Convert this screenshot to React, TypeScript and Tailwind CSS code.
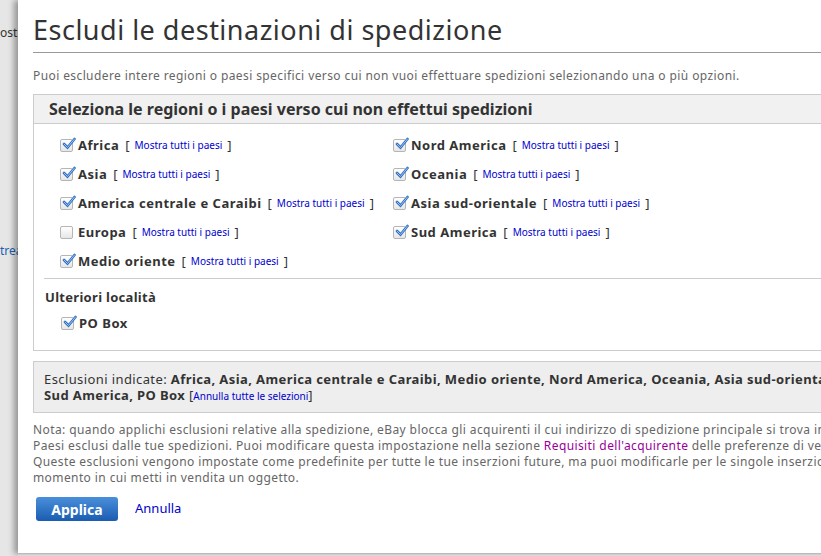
const LEFT = [
  { name: "Africa", on: true },
  { name: "Asia", on: true },
  { name: "America centrale e Caraibi", on: true },
  { name: "Europa", on: false },
  { name: "Medio oriente", on: true },
];
const RIGHT = [
  { name: "Nord America", on: true },
  { name: "Oceania", on: true },
  { name: "Asia sud-orientale", on: true },
  { name: "Sud America", on: true },
];

function Check({ on }: { on: boolean }) {
  return (
    <span className="relative inline-block w-[13px] h-[13px] rounded-[2px] border border-[#b5b5b5] bg-gradient-to-b from-white to-[#e6e6e6] shrink-0">
      {on && (
        <svg viewBox="0 0 14 14" className="absolute -top-[3px] left-[1px] w-[14px] h-[14px]">
          <path d="M2 7 L5.5 10.5 L12.5 2" fill="none" stroke="#2f6fc4" strokeWidth="2.6" strokeLinecap="round" />
          <path d="M2 7 L5.5 10.5 L12.5 2" fill="none" stroke="#9cc3f0" strokeWidth="1" strokeLinecap="round" />
        </svg>
      )}
    </span>
  );
}

function Row({ name, on }: { name: string; on: boolean }) {
  return (
    <div className="flex items-center h-[29px]">
      <Check on={on} />
      <span className="ml-[5px] font-bold text-[13px] tracking-[0.5px] text-[#333]">{name}</span>
      <span className="ml-[6px] text-[13px] text-[#333] font-[family-name:'DejaVu_Serif',serif]">[</span>
      <a className="mx-[5px] text-[10px] text-[#0000cc] font-[family-name:'DejaVu_Serif',serif]">Mostra tutti i paesi</a>
      <span className="text-[13px] text-[#333] font-[family-name:'DejaVu_Serif',serif]">]</span>
    </div>
  );
}

export default function App() {
  return (
    <div className="relative w-[821px] h-[556px] overflow-hidden bg-[#f4f4f4] font-[family-name:'Liberation_Sans',Arial,sans-serif]">
      <div className="absolute left-0 top-0 w-[18px] h-full bg-[#e6e6e6] text-[12px] text-[#333] overflow-hidden">
        <div className="pt-[24px]">ost</div>
        <div className="mt-[200px] text-[#1b5fb0]">trea</div>
      </div>
      <div className="absolute left-[18px] top-0 w-[880px] h-[554px] bg-white shadow-[-4px_0_6px_rgba(0,0,0,0.35)] border-b border-[#bbb]">
        <div className="pl-[15px] pr-[40px]">
          <h1 className="pt-[14px] pb-[6px] text-[27px] leading-[32px] tracking-[0.5px] text-[#333] font-[family-name:'Liberation_Serif',serif] border-b border-[#999]">
            Escludi le destinazioni di spedizione
          </h1>
          <p className="mt-[14px] text-[12px] text-[#666] tracking-[0.4px]">
            Puoi escludere intere regioni o paesi specifici verso cui non vuoi effettuare spedizioni selezionando una o più opzioni.
          </p>
          <div className="mt-[9px] border border-[#ccc]">
            <div className="h-[29px] bg-[#f1f1f1] border-b border-[#ccc] pl-[15px] flex items-center text-[16px] font-bold text-[#333]">
              Seleziona le regioni o i paesi verso cui non effettui spedizioni
            </div>
            <div className="pt-[7px] pl-[26px] flex">
              <div className="w-[333px]">
                {LEFT.map((r) => <Row key={r.name} {...r} />)}
              </div>
              <div>
                {RIGHT.map((r) => <Row key={r.name} {...r} />)}
              </div>
            </div>
            <div className="ml-[10px] mt-[2px] border-t border-[#ccc] pl-[1px] pt-[9px] pb-[17px]">
              <div className="text-[13px] font-bold tracking-[0.3px] text-[#333]">Ulteriori località</div>
              <div className="flex items-center mt-[6px] ml-[16px]">
                <Check on />
                <span className="ml-[5px] font-bold text-[13px] tracking-[0.5px] text-[#333]">PO Box</span>
              </div>
            </div>
          </div>
          <div className="mt-[10px] border border-[#ccc] bg-[#eee] px-[10px] pt-[9px] pb-[8px] text-[13px] leading-[16px] text-[#333] tracking-[0.4px]">
            Esclusioni indicate: <b>Africa, Asia, America centrale e Caraibi, Medio oriente, Nord America, Oceania, Asia sud-orientale, Sud America, PO Box</b>{" "}
            <span className="font-[family-name:'DejaVu_Serif',serif] tracking-normal">[<a className="text-[10px] text-[#0000cc]">Annulla tutte le selezioni</a>]</span>
          </div>
          <p className="mt-[9px] text-[12px] leading-[16px] text-[#666] tracking-[0.4px]">
            Nota: quando applichi esclusioni relative alla spedizione, eBay blocca gli acquirenti il cui indirizzo di spedizione principale si trova in Paesi esclusi dalle tue spedizioni. Puoi modificare questa impostazione nella sezione <a className="text-[#990099]">Requisiti dell'acquirente</a> delle preferenze di vendita. Queste esclusioni vengono impostate come predefinite per tutte le tue inserzioni future, ma puoi modificarle per le singole inserzioni nel momento in cui metti in vendita un oggetto.
          </p>
          <div className="mt-[11px] ml-[3px] flex items-center">
            <button className="w-[82px] h-[24px] rounded-[3px] bg-gradient-to-b from-[#4a8fdb] to-[#1a5cb0] text-white font-bold text-[14px] font-[family-name:'DejaVu_Serif',serif]">
              Applica
            </button>
            <a className="ml-[17px] text-[13px] text-[#0000cc]">Annulla</a>
          </div>
        </div>
      </div>
    </div>
  );
}
